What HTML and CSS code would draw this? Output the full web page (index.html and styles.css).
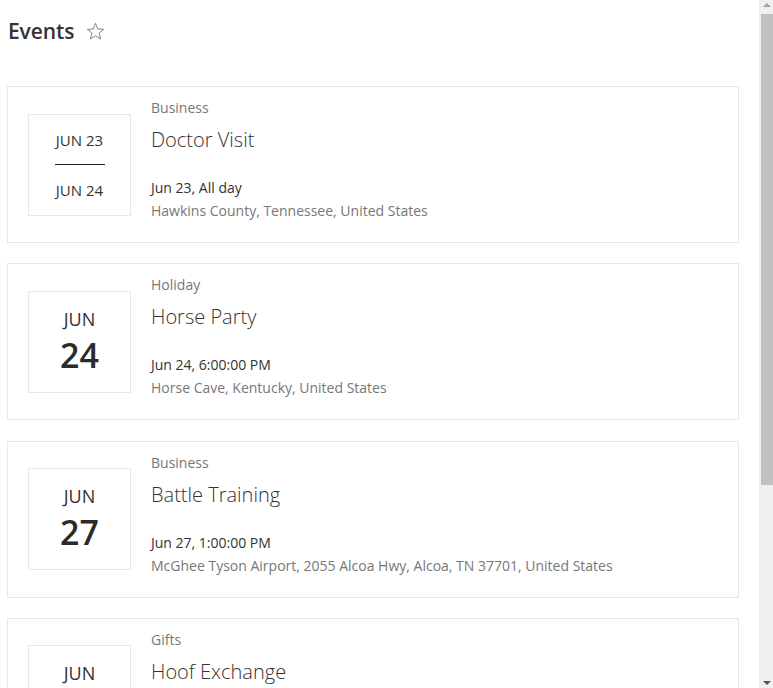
FILE: index.html
```html
<!DOCTYPE html>
<html lang="en">
<head>
<meta charset="utf-8">
<title>Events</title>
<link rel="stylesheet" href="styles.css">
</head>
<body>
<div class="frame">
  <div class="viewport">
    <div class="webpart">
      <div class="header">
        <h2 class="title">Events</h2>
        <span class="star" aria-label="Favorite">
          <svg width="19" height="19" viewBox="0 0 19 19"><path d="M9.5 1.3 L11.7 7 L17.7 7.3 L13.1 11.1 L14.6 17 L9.5 13.7 L4.4 17 L5.9 11.1 L1.3 7.3 L7.3 7 Z" fill="none" stroke="#858585" stroke-width="1" stroke-linejoin="miter"/></svg>
        </span>
      </div>
      <div class="list">
        <div class="card">
          <div class="datebox range">
            <div class="d-small">JUN 23</div>
            <div class="d-rule"></div>
            <div class="d-small">JUN 24</div>
          </div>
          <div class="info">
            <div class="cat">Business</div>
            <div class="name">Doctor Visit</div>
            <div class="when">Jun 23, All day</div>
            <div class="where">Hawkins County, Tennessee, United States</div>
          </div>
        </div>
        <div class="card">
          <div class="datebox">
            <div class="d-month">JUN</div>
            <div class="d-day">24</div>
          </div>
          <div class="info">
            <div class="cat">Holiday</div>
            <div class="name">Horse Party</div>
            <div class="when">Jun 24, 6:00:00 PM</div>
            <div class="where">Horse Cave, Kentucky, United States</div>
          </div>
        </div>
        <div class="card">
          <div class="datebox">
            <div class="d-month">JUN</div>
            <div class="d-day">27</div>
          </div>
          <div class="info">
            <div class="cat">Business</div>
            <div class="name">Battle Training</div>
            <div class="when">Jun 27, 1:00:00 PM</div>
            <div class="where">McGhee Tyson Airport, 2055 Alcoa Hwy, Alcoa, TN 37701, United States</div>
          </div>
        </div>
        <div class="card">
          <div class="datebox">
            <div class="d-month">JUN</div>
            <div class="d-day">29</div>
          </div>
          <div class="info">
            <div class="cat">Gifts</div>
            <div class="name">Hoof Exchange</div>
            <div class="when">Jun 29, 10:00:00 AM</div>
            <div class="where">Lexington, Kentucky, United States</div>
          </div>
        </div>
      </div>
    </div>
  </div>
  <div class="scrollbar" aria-hidden="true">
    <div class="sb-btn"><span class="arrow-up"></span></div>
    <div class="sb-thumb"></div>
    <div class="sb-rest"></div>
    <div class="sb-btn"><span class="arrow-down"></span></div>
  </div>
</div>
</body>
</html>
```
FILE: styles.css
```css
html, body {
  margin: 0;
  padding: 0;
  background: #ffffff;
}
body {
  font-family: "Open Sans", "Noto Sans", sans-serif;
  color: #333333;
}
.frame {
  display: flex;
  height: 688px;
  overflow: hidden;
}
.viewport {
  flex: 1 1 auto;
  overflow: hidden;
}
.webpart {
  padding: 0 0 14px 0;
}
.header {
  display: flex;
  align-items: center;
  height: 62px;
  padding-left: 8px;
}
.title {
  margin: 0;
  font-size: 21px;
  font-weight: 600;
  line-height: 28px;
  color: #333333;
  letter-spacing: -0.1px;
}
.star {
  display: flex;
  margin-left: 12px;
  width: 19px;
  height: 19px;
}
.list {
  display: flex;
  flex-direction: column;
  gap: 20.33px;
  padding: 24px 0 0 7px;
  width: 732px;
}
.card {
  display: flex;
  align-items: center;
  border: 1px solid #e8e8e8;
  padding: 0 20px;
}
.datebox {
  flex: 0 0 auto;
  box-sizing: border-box;
  width: 103px;
  height: 102px;
  border: 1px solid #e8e8e8;
  display: flex;
  flex-direction: column;
  align-items: center;
  color: #333333;
}
.d-month {
  margin-top: 15px;
  font-size: 18px;
  font-weight: 400;
  line-height: 24px;
  color: #333333;
}
.d-day {
  margin-top: 4px;
  font-size: 34px;
  font-weight: 600;
  line-height: 40px;
  color: #2b2b2b;
}
.d-small {
  font-size: 15px;
  font-weight: 400;
  line-height: 20px;
}
.range .d-small:first-child {
  margin-top: 15px;
}
.d-rule {
  width: 50px;
  height: 1px;
  background: #222222;
  margin: 14px 0 15px;
}
.info {
  margin-left: 20px;
  padding: 11px 0 21px;
  display: flex;
  flex-direction: column;
}
.cat {
  font-size: 14px;
  line-height: 20px;
  color: #777777;
}
.name {
  margin-top: 8px;
  font-size: 20px;
  font-weight: 300;
  line-height: 28px;
  color: #333333;
}
.when {
  margin-top: 24px;
  font-size: 14px;
  line-height: 20px;
  color: #333333;
}
.where {
  margin-top: 3px;
  font-size: 14px;
  line-height: 20px;
  color: #777777;
}

/* scrollbar */
.scrollbar {
  flex: 0 0 14px;
  width: 14px;
  background: #f0f0f0;
  display: flex;
  flex-direction: column;
}
.sb-btn {
  height: 14px;
  display: flex;
  align-items: center;
  justify-content: center;
}
.sb-thumb {
  height: 471px;
  margin-left: 2px;
  background: #c1c1c1;
}
.sb-rest {
  flex: 1 1 auto;
}
.arrow-up {
  width: 0;
  height: 0;
  border-left: 4px solid transparent;
  border-right: 4px solid transparent;
  border-bottom: 4px solid #a3a3a3;
  margin-left: 2px;
  margin-bottom: 4px;
}
.arrow-down {
  width: 0;
  height: 0;
  border-left: 4px solid transparent;
  border-right: 4px solid transparent;
  border-top: 4px solid #505050;
  margin-left: 2px;
  margin-top: 4px;
}
```
